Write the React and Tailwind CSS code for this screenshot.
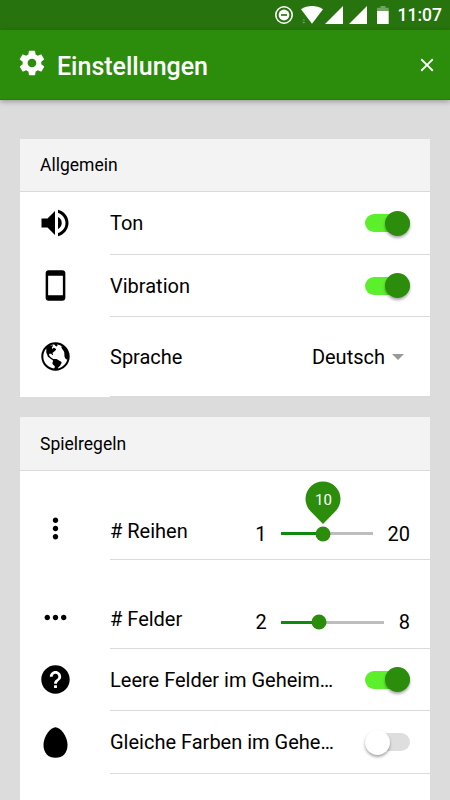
import { useState } from 'react';
import clsx from 'clsx';
import {
  IoMdSettings,
  IoMdClose,
  IoMdPhonePortrait,
  IoMdGlobe,
  IoMdMore,
  IoMdHelpCircle,
  IoMdEgg
} from 'react-icons/io';
import { MdVolumeUp } from 'react-icons/md';

const StatusBar = () => (
  <div className="flex h-[30px] items-center justify-end bg-[#27730d] pr-[8px] text-white">
    <svg width="116" height="20" viewBox="0 0 116 20" className="mr-[7px]" fill="currentColor">
      <circle cx="9" cy="10" r="8.2" fill="none" stroke="currentColor" strokeWidth="1.6" />
      <circle cx="9" cy="10" r="5.4" />
      <rect x="6" y="9.2" width="6" height="1.6" fill="#27730d" />
      <path d="M26 4.2C32.5 -0.1 41.5 -0.1 48 4.2L37 18.7Z" />
      <path d="M27.3 15.6l1.5-1.4 1.5 1.4zM27.3 17l1.5 1.4 1.5-1.4z" opacity=".4" />
      <path d="M68 1v18H50z" />
      <path d="M92 1v18H74z" />
      <path d="M105.5 1h5v1.8h3.2V6h-11.7V2.8h3.5z" opacity=".35" />
      <path d="M102 6h11.7v13H102z" />
    </svg>
    <span className="pt-[2px] text-[17.5px] leading-none font-medium">11:07</span>
  </div>
);

const Toggle = ({ checked, onChange }) => (
  <button
    role="switch"
    aria-checked={checked}
    onClick={() => onChange(!checked)}
    className={clsx(
      'flex h-[18px] w-[45px] shrink-0 items-center rounded-full',
      checked ? 'justify-end bg-[#5cf02c]' : 'justify-start bg-[#dedede]'
    )}
  >
    <span
      className={clsx(
        'size-[25px] rounded-full shadow-[0_2px_3px_rgba(0,0,0,0.35)]',
        checked ? 'bg-[#2c8c0c]' : 'bg-white'
      )}
    />
  </button>
);

const Slider = ({ value, min, max, pin, className }) => {
  const percent = ((value - min) / (max - min)) * 100;
  return (
    <div className={clsx('relative h-[3px] bg-[#bdbdbd]', className)}>
      <div className="h-full bg-[#0f8a0f]" style={{ width: `${percent}%` }} />
      <div
        className="absolute top-1/2 size-[15px] -translate-x-1/2 -translate-y-1/2 rounded-full bg-[#2c8c0c]"
        style={{ left: `${percent}%` }}
      />
      {pin && (
        <div
          className="absolute -top-[51px] flex h-[44px] w-[36px] -translate-x-1/2 justify-center pt-[9px] text-[15px] leading-[20px] text-white"
          style={{ left: `${percent}%` }}
        >
          <svg width="36" height="44" viewBox="0 0 36 44" className="absolute inset-0">
            <path d="M18 43 5.3 30A17.5 17.5 0 1 1 30.7 30Z" fill="#2c8c0c" />
          </svg>
          <span className="relative">{value}</span>
        </div>
      )}
    </div>
  );
};

const Card = ({ title, headerClass, children }) => (
  <section className="mx-5 bg-white">
    <h2 className={clsx('flex items-center border-b border-[#dadada] bg-[#f3f3f3] pl-5 text-[17.5px]', headerClass)}>
      {title}
    </h2>
    {children}
  </section>
);

const Row = ({ icon, label, className, iconClass, labelClass, children }) => (
  <div className={clsx('flex pl-5', className)}>
    <div className={clsx('flex w-[70px] shrink-0 items-center pb-px', iconClass)}>
      <div className="flex w-[30px] justify-center">
        <div className="shrink-0">{icon}</div>
      </div>
    </div>
    <div className="flex min-w-0 flex-1 items-center border-b border-[#dadada] pr-5">
      <span className={clsx('min-w-0 flex-1 truncate text-[20px]', labelClass)}>{label}</span>
      {children}
    </div>
  </div>
);

const App = () => {
  const [settings, setSettings] = useState({
    sound: true,
    vibration: true,
    emptyFields: true,
    sameColors: false
  });

  const update = (key) => (value) => setSettings({ ...settings, [key]: value });

  return (
    <div className="h-[800px] w-[450px] overflow-hidden bg-[#dcdcdc] font-['Roboto',sans-serif] text-black">
      <StatusBar />

      <header className="flex h-[70px] items-center border-b border-[#1f7f0a] bg-[#2c8c0c] pr-[12px] pl-[17px] text-white shadow-[0_2px_5px_rgba(0,0,0,0.28)]">
        <IoMdSettings size={30} className="-mt-1" />
        <h1 className="ml-[10px] flex-1 pt-1 text-[25px] leading-[30px] font-medium">Einstellungen</h1>
        <IoMdClose size={22} />
      </header>

      <main className="flex flex-col gap-5 pt-[39px]">
        <Card title="Allgemein" headerClass="h-[53px]">
          <Row icon={<MdVolumeUp size={36} />} label="Ton" className="h-[63px]">
            <Toggle checked={settings.sound} onChange={update('sound')} />
          </Row>
          <Row icon={<IoMdPhonePortrait size={35} />} label="Vibration" className="h-[62px]">
            <Toggle checked={settings.vibration} onChange={update('vibration')} />
          </Row>
          <Row icon={<IoMdGlobe size={35} />} label="Sprache" className="h-[80px]">
            <span className="text-[20px]">Deutsch</span>
            <span className="mr-[6px] ml-[7px] border-x-[6px] border-t-[6px] border-x-transparent border-t-[#999]" />
          </Row>
        </Card>

        <Card title="Spielregeln" headerClass="h-[54px] pt-[2px]">
          <Row
            icon={<IoMdMore size={35} />}
            label="# Reihen"
            className="h-[89px]"
            iconClass="pt-[26px]"
            labelClass="pt-[31px]"
          >
            <div className="flex items-center pt-[37px] text-[20px]">
              <span>1</span>
              <Slider value={10} min={1} max={20.3} pin className="mr-[15px] ml-[14px] w-[92px]" />
              <span>20</span>
            </div>
          </Row>
          <Row
            icon={<IoMdMore size={35} className="rotate-90" />}
            label="# Felder"
            className="h-[89px]"
            iconClass="pt-[26px]"
            labelClass="pt-[30px]"
          >
            <div className="flex items-center pt-[36px] text-[20px]">
              <span>2</span>
              <Slider value={4.2} min={2} max={8} className="mr-[15px] ml-[14px] w-[103px]" />
              <span>8</span>
            </div>
          </Row>
          <Row icon={<IoMdHelpCircle size={35} />} label="Leere Felder im Geheim…" className="h-[62px]">
            <Toggle checked={settings.emptyFields} onChange={update('emptyFields')} />
          </Row>
          <Row icon={<IoMdEgg size={35} />} label="Gleiche Farben im Gehe…" className="h-[63px]">
            <Toggle checked={settings.sameColors} onChange={update('sameColors')} />
          </Row>
          <div className="h-[40px]" />
        </Card>
      </main>
    </div>
  );
};

export default App;
